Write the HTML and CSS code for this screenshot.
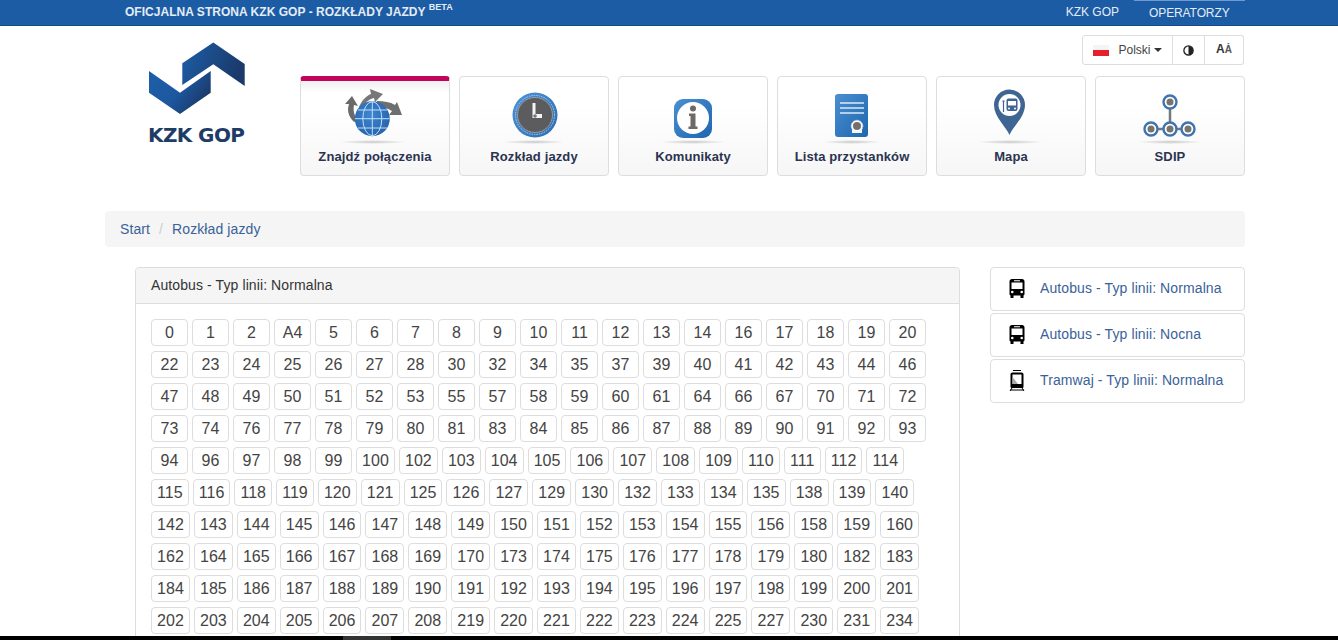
FILE: index.html
```html
<!DOCTYPE html>
<html lang="pl">
<head>
    <meta charset="UTF-8">
    <title>KZK GOP - Rozkłady jazdy</title>
    <link rel="stylesheet" href="styles.css">
</head>
<body>
<div class="page">
    <div class="topbar">
        <div class="wrap topbar-inner">
            <div class="site-title">OFICJALNA STRONA KZK GOP - ROZKŁADY JAZDY <sup>BETA</sup></div>
            <div class="top-links">
                <a class="top-link" href="#">KZK GOP</a>
                <a class="top-link top-link-active" href="#">OPERATORZY</a>
            </div>
        </div>
    </div>

    <div class="wrap">
        <div class="header">
            <div class="logo">
                <svg width="97" height="74" viewBox="148 42 97 74">
                    <defs>
                        <linearGradient id="logoUp" x1="0" y1="0" x2="1" y2="0.3">
                            <stop offset="0" stop-color="#1c5fa8"/>
                            <stop offset="1" stop-color="#1b3a6b"/>
                        </linearGradient>
                        <linearGradient id="logoDown" x1="0" y1="0" x2="1" y2="0.5">
                            <stop offset="0" stop-color="#1c5fa8"/>
                            <stop offset="0.55" stop-color="#1c58a0"/>
                            <stop offset="1" stop-color="#1b3a6b"/>
                        </linearGradient>
                    </defs>
                    <polygon fill="url(#logoUp)" points="182.3,63.3 213.3,42.5 244.7,64 244.7,86 213.3,64.3 182.3,85"/>
                    <polygon fill="url(#logoDown)" points="149,71 180,92.7 210.7,71 210.7,92.7 180,114 149,92.7"/>
                </svg>
                <div class="logo-text">KZK GOP</div>
            </div>
            <div class="header-right">
                <div class="tools">
                    <button class="tool tool-lang">
                        <span class="flag"></span>Polski<span class="caret"></span>
                    </button>
                    <div class="tool-group">
                        <button class="tool tool-contrast">
                            <svg width="11" height="11" viewBox="0 0 10 10">
                                <circle cx="5" cy="5" r="4.2" fill="#fff" stroke="#222" stroke-width="1.2"/>
                                <path d="M5 .8a4.2 4.2 0 0 1 0 8.4z" fill="#222"/>
                            </svg>
                        </button>
                        <button class="tool tool-font"><span class="tool-font-text">A<span class="tool-font-small">Ȧ</span></span></button>
                    </div>
                </div>
                <div class="cards">
                    <a class="card card-active" href="#">
                        <svg class="card-icon" width="80" height="60" viewBox="0 0 80 60">
                            <defs>
                                <radialGradient id="shade">
                                    <stop offset="0" stop-color="#c8c8c8"/>
                                    <stop offset="1" stop-color="#c8c8c8" stop-opacity="0"/>
                                </radialGradient>
                                <radialGradient id="globe" cx="0.45" cy="0.4" r="0.7">
                                    <stop offset="0" stop-color="#3f86d0"/>
                                    <stop offset="1" stop-color="#235fa8"/>
                                </radialGradient>
                            </defs>
                            <ellipse cx="38" cy="56" rx="34" ry="2" fill="url(#shade)"/>
                            <path d="M19 36C13 30 12 24 14 18L10 18 17 10 23 20 19 19C18 24 19 30 23 34z" fill="#6a6a6a"/>
                            <path d="M24 21C27 14 31 10 36 8L35 3 48 8 40 16 39 12C34 13 29 17 27 24z" fill="#777"/>
                            <path d="M42 15C49 15 55 16 60 19L62 16 67 29 54 29 57 25C52 22 47 20 42 20z" fill="#6f6f6f"/>
                            <circle cx="37.300" cy="32.700" r="17.500" fill="url(#globe)"/>
                            <g fill="none" stroke="#bfe0fa" stroke-width="1">
                                <ellipse cx="37.300" cy="32.700" rx="9.500" ry="17"/>
                                <path d="M37.300 15.500v34.500M20 32.700h34.500M23 24h29M23 42h29"/>
                            </g>
                        </svg>
                        <span class="card-label">Znajdź połączenia</span>
                    </a>
                    <a class="card" href="#">
                        <svg class="card-icon" width="80" height="60" viewBox="0 0 80 60">
                            <defs>
                                <linearGradient id="ring" x1="0" y1="0" x2="1" y2="1">
                                    <stop offset="0" stop-color="#4d94d6"/>
                                    <stop offset="1" stop-color="#2c6cb0"/>
                                </linearGradient>
                            </defs>
                            <ellipse cx="40" cy="56" rx="31" ry="2" fill="url(#shade)"/>
                            <circle cx="41" cy="29" r="22.500" fill="url(#ring)"/>
                            <circle cx="41" cy="29" r="19.500" fill="none" stroke="#a9cdec" stroke-width="1" stroke-dasharray="1.500 1"/>
                            <circle cx="41" cy="29" r="17.500" fill="#5c5c5e" stroke="#9a9a9a" stroke-width="1"/>
                            <path d="M38.500 17h3v11h6.500v4h-9.500z" fill="#f4f4f4"/>
                            <circle cx="41" cy="30" r="1.800" fill="#777"/>
                        </svg>
                        <span class="card-label">Rozkład jazdy</span>
                    </a>
                    <a class="card" href="#">
                        <svg class="card-icon" width="80" height="60" viewBox="0 0 80 60">
                            <defs>
                                <linearGradient id="tile" x1="0" y1="0" x2="1" y2="1">
                                    <stop offset="0" stop-color="#4a8fd0"/>
                                    <stop offset="1" stop-color="#1f66b0"/>
                                </linearGradient>
                            </defs>
                            <ellipse cx="40" cy="56" rx="33" ry="2" fill="url(#shade)"/>
                            <rect x="21" y="13" width="38" height="39" rx="9" fill="url(#tile)"/>
                            <circle cx="40" cy="32" r="16" fill="#fff"/>
                            <circle cx="40" cy="22.500" r="3" fill="#6d6a66"/>
                            <path d="M36 27.500h6.500v13h2v2.500h-9v-2.500h2v-10.500h-1.500z" fill="#6d6a66"/>
                        </svg>
                        <span class="card-label">Komunikaty</span>
                    </a>
                    <a class="card" href="#">
                        <svg class="card-icon" width="80" height="60" viewBox="0 0 80 60">
                            <ellipse cx="40" cy="56" rx="29" ry="2" fill="url(#shade)"/>
                            <rect x="23" y="8" width="33" height="43" rx="3" fill="url(#tile)"/>
                            <path d="M28 17h24M28 22h24M28 27h24" stroke="#dbe9f6" stroke-width="1.500"/>
                            <path d="M40 47v-6h10v6z" fill="#f4f6f8"/>
                            <circle cx="45" cy="40" r="5.800" fill="#fff" stroke="#dbe9f6" stroke-width="1" stroke-dasharray="1 1"/>
                            <circle cx="45" cy="40" r="4" fill="#75706a"/>
                        </svg>
                        <span class="card-label">Lista przystanków</span>
                    </a>
                    <a class="card" href="#">
                        <svg class="card-icon" width="80" height="60" viewBox="0 0 80 60">
                            <ellipse cx="39" cy="56" rx="33" ry="2" fill="url(#shade)"/>
                            <g transform="translate(-1.500 0)">
                                <path d="M40 49C37 41 24.500 31 24.500 19a15.500 15.500 0 0 1 31 0C55.500 31 43 41 40 49z" fill="#3f6592"/>
                                <circle cx="40" cy="19" r="11" fill="#fff"/>
                                <rect x="37" y="12.500" width="11" height="12.500" rx="2" fill="#3f6592"/>
                                <rect x="38.500" y="15" width="8" height="4.500" fill="#fff"/>
                                <path d="M34 15v11M32.800 15h2.400" stroke="#3f6592" stroke-width="1.200"/>
                                <circle cx="39.500" cy="22.500" r="1" fill="#fff"/>
                                <circle cx="45.500" cy="22.500" r="1" fill="#fff"/>
                            </g>
                        </svg>
                        <span class="card-label">Mapa</span>
                    </a>
                    <a class="card" href="#">
                        <svg class="card-icon" width="80" height="60" viewBox="0 0 80 60">
                            <ellipse cx="40" cy="56" rx="32" ry="2" fill="url(#shade)"/>
                            <path d="M40 22v22M21 43h38" stroke="#77787a" stroke-width="2.500"/>
                            <g fill="#fff" stroke="#3f74ad" stroke-width="2.400">
                                <circle cx="40" cy="16" r="6.500"/>
                                <circle cx="21" cy="43" r="6.500"/>
                                <circle cx="40" cy="43" r="6.500"/>
                                <circle cx="58" cy="43" r="6.500"/>
                            </g>
                            <g fill="#77736e">
                                <circle cx="40" cy="16" r="3.500"/>
                                <circle cx="21" cy="43" r="3.500"/>
                                <circle cx="40" cy="43" r="3.500"/>
                                <circle cx="58" cy="43" r="3.500"/>
                            </g>
                        </svg>
                        <span class="card-label">SDIP</span>
                    </a>
                </div>
            </div>
        </div>

        <div class="breadcrumb">
            <a href="#">Start</a><span class="crumb-sep">/</span><a href="#">Rozkład jazdy</a>
        </div>

        <div class="content">
            <div class="panel">
                <div class="panel-heading">Autobus - Typ linii: Normalna</div>
                <div class="lines">
                    <a class="line" href="#">0</a><a class="line" href="#">1</a><a class="line" href="#">2</a><a class="line" href="#">A4</a><a class="line" href="#">5</a><a class="line" href="#">6</a><a class="line" href="#">7</a><a class="line" href="#">8</a><a class="line" href="#">9</a><a class="line" href="#">10</a><a class="line" href="#">11</a><a class="line" href="#">12</a><a class="line" href="#">13</a><a class="line" href="#">14</a><a class="line" href="#">16</a><a class="line" href="#">17</a><a class="line" href="#">18</a><a class="line" href="#">19</a><a class="line" href="#">20</a>
                    <a class="line" href="#">22</a><a class="line" href="#">23</a><a class="line" href="#">24</a><a class="line" href="#">25</a><a class="line" href="#">26</a><a class="line" href="#">27</a><a class="line" href="#">28</a><a class="line" href="#">30</a><a class="line" href="#">32</a><a class="line" href="#">34</a><a class="line" href="#">35</a><a class="line" href="#">37</a><a class="line" href="#">39</a><a class="line" href="#">40</a><a class="line" href="#">41</a><a class="line" href="#">42</a><a class="line" href="#">43</a><a class="line" href="#">44</a><a class="line" href="#">46</a>
                    <a class="line" href="#">47</a><a class="line" href="#">48</a><a class="line" href="#">49</a><a class="line" href="#">50</a><a class="line" href="#">51</a><a class="line" href="#">52</a><a class="line" href="#">53</a><a class="line" href="#">55</a><a class="line" href="#">57</a><a class="line" href="#">58</a><a class="line" href="#">59</a><a class="line" href="#">60</a><a class="line" href="#">61</a><a class="line" href="#">64</a><a class="line" href="#">66</a><a class="line" href="#">67</a><a class="line" href="#">70</a><a class="line" href="#">71</a><a class="line" href="#">72</a>
                    <a class="line" href="#">73</a><a class="line" href="#">74</a><a class="line" href="#">76</a><a class="line" href="#">77</a><a class="line" href="#">78</a><a class="line" href="#">79</a><a class="line" href="#">80</a><a class="line" href="#">81</a><a class="line" href="#">83</a><a class="line" href="#">84</a><a class="line" href="#">85</a><a class="line" href="#">86</a><a class="line" href="#">87</a><a class="line" href="#">88</a><a class="line" href="#">89</a><a class="line" href="#">90</a><a class="line" href="#">91</a><a class="line" href="#">92</a><a class="line" href="#">93</a>
                    <a class="line" href="#">94</a><a class="line" href="#">96</a><a class="line" href="#">97</a><a class="line" href="#">98</a><a class="line" href="#">99</a><a class="line" href="#">100</a><a class="line" href="#">102</a><a class="line" href="#">103</a><a class="line" href="#">104</a><a class="line" href="#">105</a><a class="line" href="#">106</a><a class="line" href="#">107</a><a class="line" href="#">108</a><a class="line" href="#">109</a><a class="line" href="#">110</a><a class="line" href="#">111</a><a class="line" href="#">112</a><a class="line" href="#">114</a>
                    <a class="line" href="#">115</a><a class="line" href="#">116</a><a class="line" href="#">118</a><a class="line" href="#">119</a><a class="line" href="#">120</a><a class="line" href="#">121</a><a class="line" href="#">125</a><a class="line" href="#">126</a><a class="line" href="#">127</a><a class="line" href="#">129</a><a class="line" href="#">130</a><a class="line" href="#">132</a><a class="line" href="#">133</a><a class="line" href="#">134</a><a class="line" href="#">135</a><a class="line" href="#">138</a><a class="line" href="#">139</a><a class="line" href="#">140</a>
                    <a class="line" href="#">142</a><a class="line" href="#">143</a><a class="line" href="#">144</a><a class="line" href="#">145</a><a class="line" href="#">146</a><a class="line" href="#">147</a><a class="line" href="#">148</a><a class="line" href="#">149</a><a class="line" href="#">150</a><a class="line" href="#">151</a><a class="line" href="#">152</a><a class="line" href="#">153</a><a class="line" href="#">154</a><a class="line" href="#">155</a><a class="line" href="#">156</a><a class="line" href="#">158</a><a class="line" href="#">159</a><a class="line" href="#">160</a>
                    <a class="line" href="#">162</a><a class="line" href="#">164</a><a class="line" href="#">165</a><a class="line" href="#">166</a><a class="line" href="#">167</a><a class="line" href="#">168</a><a class="line" href="#">169</a><a class="line" href="#">170</a><a class="line" href="#">173</a><a class="line" href="#">174</a><a class="line" href="#">175</a><a class="line" href="#">176</a><a class="line" href="#">177</a><a class="line" href="#">178</a><a class="line" href="#">179</a><a class="line" href="#">180</a><a class="line" href="#">182</a><a class="line" href="#">183</a>
                    <a class="line" href="#">184</a><a class="line" href="#">185</a><a class="line" href="#">186</a><a class="line" href="#">187</a><a class="line" href="#">188</a><a class="line" href="#">189</a><a class="line" href="#">190</a><a class="line" href="#">191</a><a class="line" href="#">192</a><a class="line" href="#">193</a><a class="line" href="#">194</a><a class="line" href="#">195</a><a class="line" href="#">196</a><a class="line" href="#">197</a><a class="line" href="#">198</a><a class="line" href="#">199</a><a class="line" href="#">200</a><a class="line" href="#">201</a>
                    <a class="line" href="#">202</a><a class="line" href="#">203</a><a class="line" href="#">204</a><a class="line" href="#">205</a><a class="line" href="#">206</a><a class="line" href="#">207</a><a class="line" href="#">208</a><a class="line" href="#">219</a><a class="line" href="#">220</a><a class="line" href="#">221</a><a class="line" href="#">222</a><a class="line" href="#">223</a><a class="line" href="#">224</a><a class="line" href="#">225</a><a class="line" href="#">227</a><a class="line" href="#">230</a><a class="line" href="#">231</a><a class="line" href="#">234</a>
                </div>
            </div>

            <div class="side">
                <a class="side-item" href="#">
                    <svg class="side-icon" width="16" height="19" viewBox="0 0 16 19">
                        <path d="M3 0h10c1.500 0 2.500 1 2.500 2.500V15c0 .8-.4 1.200-1 1.300V19h-3v-2.600h-7V19h-3v-2.700c-.6-.1-1-.5-1-1.300V2.500C.5 1 1.500 0 3 0z"/>
                        <path d="M2.500 3.500h11v6.500h-11zM5 1.300h6v1H5z" fill="#fff"/>
                        <circle cx="3.300" cy="13" r="1.300" fill="#fff"/>
                        <circle cx="12.700" cy="13" r="1.300" fill="#fff"/>
                    </svg>
                    <span>Autobus - Typ linii: Normalna</span>
                </a>
                <a class="side-item" href="#">
                    <svg class="side-icon" width="16" height="19" viewBox="0 0 16 19">
                        <path d="M3 0h10c1.500 0 2.500 1 2.500 2.500V15c0 .8-.4 1.200-1 1.300V19h-3v-2.600h-7V19h-3v-2.700c-.6-.1-1-.5-1-1.300V2.500C.5 1 1.500 0 3 0z"/>
                        <path d="M2.500 3.500h11v6.500h-11zM5 1.300h6v1H5z" fill="#fff"/>
                        <circle cx="3.300" cy="13" r="1.300" fill="#fff"/>
                        <circle cx="12.700" cy="13" r="1.300" fill="#fff"/>
                    </svg>
                    <span>Autobus - Typ linii: Nocna</span>
                </a>
                <a class="side-item" href="#">
                    <svg class="side-icon" width="16" height="21" viewBox="0 0 16 21">
                        <path d="M4 0h8v1H4zM3.500 2.500h9c1.200 0 2 .8 2 2v12c0 1-.6 1.500-1.500 1.500H3c-.9 0-1.500-.5-1.500-1.500v-12c0-1.200.8-2 2-2z"/>
                        <path d="M3.500 4.500h9v9.500h-9z" fill="#fff"/>
                        <path d="M3.500 14L9 14 3.500 7z" fill="#aaa"/>
                        <path d="M3 18l-2 3M13 18l2 3M1 20h14" stroke="#000" fill="none"/>
                    </svg>
                    <span>Tramwaj - Typ linii: Normalna</span>
                </a>
            </div>
        </div>
    </div>
</div>
<div class="bottom-bar"><div class="bottom-thumb"></div></div>
</body>
</html>
```
FILE: styles.css
```css
html, body {
    height: 100%;
    margin: 0;
}
body {
    font-family: "Liberation Sans", Arial, sans-serif;
    font-size: 14px;
    letter-spacing: 0.1px;
    color: #333;
    background-color: #fff;
    display: flex;
    flex-direction: column;
    overflow: hidden;
}
a {
    text-decoration: none;
}
.page {
    flex: 1;
    min-height: 0;
    overflow: hidden;
}
.wrap {
    width: 1140px;
    margin-left: 105px;
}

/* top bar */
.topbar {
    height: 25px;
    background-color: #1c5ca5;
    border-bottom: 1px solid #174a85;
}
.topbar-inner {
    display: flex;
    justify-content: space-between;
}
.site-title {
    padding: 5px 0 0 20px;
    font-size: 12px;
    font-weight: bold;
    line-height: 14px;
    letter-spacing: 0.03px;
    color: #e4ecf6;
}
.site-title sup {
    font-size: 9px;
    line-height: 0;
    position: relative;
    top: -1px;
    vertical-align: super;
}
.top-links {
    display: flex;
}
.top-link {
    padding: 5px 15px 0;
    font-size: 12px;
    line-height: 14px;
    letter-spacing: 0;
    color: #e4ecf6;
}
.top-link-active {
    width: 80px;
    padding: 5px 16px 0 15px;
    border-top: 1px solid #6f9ad0;
    letter-spacing: -0.1px;
}

/* header */
.header {
    display: flex;
    height: 150px;
}
.logo {
    width: 195px;
    padding: 16px 0 0 43px;
    box-sizing: border-box;
}
.logo svg {
    display: block;
}
.logo-text {
    width: 97px;
    margin-top: 8px;
    font-family: "DejaVu Sans", sans-serif;
    font-size: 20px;
    font-weight: 700;
    line-height: 22px;
    letter-spacing: -0.6px;
    white-space: nowrap;
    color: #1f3c66;
}
.header-right {
    width: 945px;
    padding-top: 9px;
}
.tools {
    display: flex;
    justify-content: flex-end;
    height: 30px;
    padding-right: 1px;
    margin-bottom: 11px;
}
.tool {
    background: #fff;
    border: 1px solid #ddd;
    height: 30px;
    padding: 0;
    font-family: inherit;
    font-size: 12px;
    color: #444;
    display: flex;
    align-items: center;
    justify-content: center;
}
.tool-lang {
    width: 91px;
    border-radius: 3px 0 0 3px;
}
.flag {
    width: 16px;
    height: 11px;
    margin-right: 9px;
    background: linear-gradient(#f4f4f4 50%, #e3202c 50%);
}
.caret {
    width: 0;
    height: 0;
    margin-left: 3px;
    border-top: 4px solid #333;
    border-left: 4px solid transparent;
    border-right: 4px solid transparent;
}
.tool-group {
    display: flex;
}
.tool-contrast {
    width: 32px;
    border-left-width: 0;
}
.tool-font {
    width: 39px;
    border-left-width: 0;
    border-radius: 0 3px 3px 0;
    font-weight: bold;
    font-size: 12px;
    color: #333;
}
.tool-font-text {
    margin-bottom: 3px;
}
.tool-font-small {
    font-size: 10px;
    color: #555;
}
.cards {
    display: flex;
    gap: 9px;
}
.card {
    width: 150px;
    height: 100px;
    box-sizing: border-box;
    border: 1px solid #ddd;
    border-radius: 4px;
    background: linear-gradient(#fff 30%, #f6f6f6);
    display: flex;
    flex-direction: column;
    align-items: center;
    padding-top: 9px;
}
.card-active {
    border-top: 5px solid #c2045a;
    padding-top: 5px;
    background: linear-gradient(#eee, #fff 12%, #fff 30%, #f6f6f6);
}
.card-icon {
    display: block;
}
.card-label {
    margin-top: 3px;
    font-size: 13px;
    font-weight: bold;
    line-height: 16px;
    letter-spacing: 0.12px;
    color: #2b3350;
}

/* breadcrumb */
.breadcrumb {
    height: 36px;
    margin-top: 35px;
    padding: 0 15px;
    box-sizing: border-box;
    display: flex;
    align-items: center;
    background-color: #f5f5f5;
    border-radius: 4px;
}
.breadcrumb a {
    color: #3a6298;
}
.crumb-sep {
    padding: 0 9px;
    color: #ccc;
}

/* content */
.content {
    display: flex;
    align-items: flex-start;
    margin-top: 20px;
    margin-left: 30px;
    gap: 30px;
}
.panel {
    width: 825px;
    box-sizing: border-box;
    flex-shrink: 0;
    border: 1px solid #ddd;
    border-radius: 4px;
    background: #fff;
}
.panel-heading {
    height: 33px;
    padding: 0 15px 2px;
    display: flex;
    align-items: center;
    background-color: #f5f5f5;
    border-bottom: 1px solid #ddd;
    border-radius: 3px 3px 0 0;
}
.lines {
    display: flex;
    flex-wrap: wrap;
    gap: 5px 4px;
    padding: 15px;
}
.line {
    min-width: 37px;
    height: 27px;
    box-sizing: border-box;
    padding: 0 5.1px;
    border: 1px solid #ddd;
    border-radius: 4px;
    font-size: 16px;
    line-height: 25px;
    letter-spacing: 0;
    text-align: center;
    color: #444;
    background: #fff;
}
.side {
    width: 255px;
    display: flex;
    flex-direction: column;
    gap: 2px;
}
.side-item {
    height: 44px;
    box-sizing: border-box;
    border: 1px solid #ddd;
    border-radius: 4px;
    padding: 0 0 2px 18px;
    display: flex;
    align-items: center;
    color: #3a6298;
}
.side-icon {
    margin-right: 15px;
    flex-shrink: 0;
}

/* bar along the bottom edge */
.bottom-bar {
    height: 4px;
    flex-shrink: 0;
    background: #000;
}
.bottom-thumb {
    width: 48px;
    height: 4px;
    margin-left: 343px;
    background: #333;
}
```
